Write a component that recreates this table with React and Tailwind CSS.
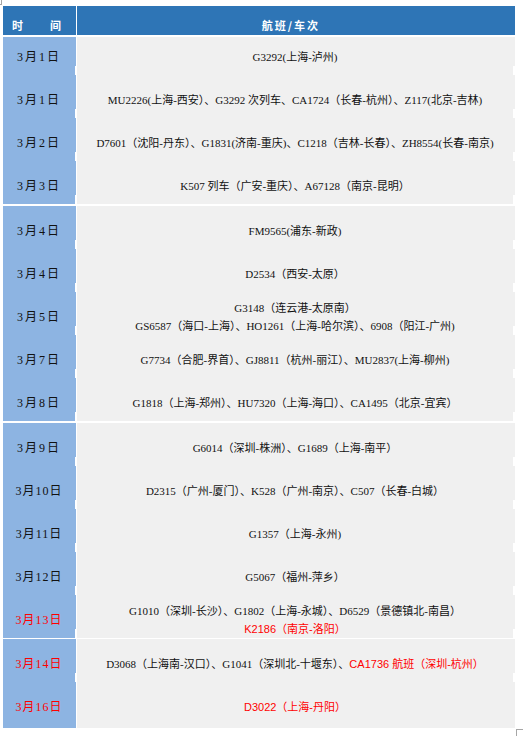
import React from "react";

const R = true;

// each row: date, height, padding-top, red date?, lines of [text, red]
const rows = [
  { d: "3月1日", h: 38, pt: 2, l: [[["G3292(上海-泸州)"]]] },
  { d: "3月1日", l: [[["MU2226(上海-西安）、G3292 次列车、CA1724（长春-杭州）、Z117(北京-吉林)"]]] },
  { d: "3月2日", l: [[["D7601（沈阳-丹东）、G1831(济南-重庆)、C1218（吉林-长春）、ZH8554(长春-南京)"]]] },
  { d: "3月3日", l: [[["K507 列车（广安-重庆）、A67128（南京-昆明）"]]], sep: 2 },
  { d: "3月4日", l: [[["FM9565(浦东-新政)"]]] },
  { d: "3月4日", l: [[["D2534（西安-太原）"]]] },
  {
    d: "3月5日",
    l: [[["G3148（连云港-太原南）"]], [["GS6587（海口-上海）、HO1261（上海-哈尔滨）、6908（阳江-广州)"]]],
  },
  { d: "3月7日", l: [[["G7734（合肥-界首）、GJ8811（杭州-丽江）、MU2837(上海-柳州)"]]] },
  { d: "3月8日", l: [[["G1818（上海-郑州）、HU7320（上海-海口）、CA1495（北京-宜宾）"]]], sep: 2 },
  { d: "3月9日", l: [[["G6014（深圳-株洲）、G1689（上海-南平）"]]] },
  { d: "3月10日", l: [[["D2315（广州-厦门）、K528（广州-南京）、C507（长春-白城）"]]] },
  { d: "3月11日", l: [[["G1357（上海-永州)"]]] },
  { d: "3月12日", l: [[["G5067（福州-萍乡）"]]] },
  {
    d: "3月13日",
    red: R,
    l: [[["G1010（深圳-长沙）、G1802（上海-永城）、D6529（景德镇北-南昌）"]], [["K2186（南京-洛阳）", R]]],
    sep: 1,
  },
  {
    d: "3月14日",
    red: R,
    l: [[["D3068（上海南-汉口）、G1041（深圳北-十堰东）、"], ["CA1736 航班（深圳-杭州）", R]]],
  },
  { d: "3月16日", red: R, h: 46, pt: 4, l: [[["D3022（上海-丹阳）", R]]], last: true },
];

function Notch({ w, show }) {
  return (
    <div className={`flex flex-col justify-end self-stretch ${w}`}>
      {show && <div className="h-[9px] bg-white" />}
    </div>
  );
}

function Row({ r }) {
  const h = r.h || 43;
  const pt = r.pt ?? 7;
  const two = r.d.length > 4;
  return (
    <div className="flex gap-px" style={{ height: h }}>
      <div className="w-[73px] flex bg-[#8db4e2]">
        <div
          className={`flex-1 flex items-center justify-center text-[12px] font-['Liberation_Serif','Noto_Sans_CJK_SC',serif] ${
            two ? "tracking-[1px]" : "tracking-[2px]"
          } ${r.red ? "text-[#ff0000]" : "text-[#111]"}`}
          style={{ paddingTop: pt }}
        >
          {r.d}
        </div>
        <Notch w="w-[1px]" show={!r.last} />
      </div>
      <div className="w-[438px] flex bg-[#f0f0f0]">
        <div
          className="flex-1 flex flex-col items-center justify-center text-[11px] leading-[18px] font-['Liberation_Serif','Noto_Sans_CJK_SC',serif] text-[#111]"
          style={{ paddingTop: pt }}
        >
          {r.l.map((line, i) => (
            <div key={i} className="whitespace-nowrap">
              {line.map(([t, red], j) =>
                red ? (
                  <span key={j} className="text-[#ff0000] font-['Liberation_Sans','Noto_Sans_CJK_SC',sans-serif]">
                    {t}
                  </span>
                ) : (
                  <span key={j}>{t}</span>
                )
              )}
            </div>
          ))}
        </div>
        <Notch w="w-[2px]" show={!r.last} />
      </div>
    </div>
  );
}

export default function App() {
  return (
    <div className="w-[523px] h-[736px] bg-white overflow-hidden">
      <div className="h-[6px]">
        <div className="w-[2px] h-[5px] border-r border-b border-[#a6a6a6]" />
      </div>
      <div className="ml-[3px] w-[512px] flex flex-col">
        <div className="flex gap-px h-[29px] text-white text-[11px] font-bold font-['Noto_Sans_CJK_SC',sans-serif]">
          <div className="w-[73px] bg-[#2e75b6] flex items-center gap-[27px] pl-[9px] pt-[9px]">
            <span>时</span>
            <span>间</span>
          </div>
          <div className="w-[438px] bg-[#2e75b6] flex items-center justify-center tracking-[2px] pt-[9px] pr-[10px]">
            航班/车次
          </div>
        </div>
        <div className="h-[2px]" />
        {rows.map((r, i) => (
          <React.Fragment key={i}>
            <Row r={r} />
            {r.sep && <div className="bg-white" style={{ height: r.sep }} />}
          </React.Fragment>
        ))}
      </div>
      <div className="ml-[516px] mt-[1px] w-[7px] h-[7px] border-l border-t border-[#a6a6a6]" />
    </div>
  );
}
